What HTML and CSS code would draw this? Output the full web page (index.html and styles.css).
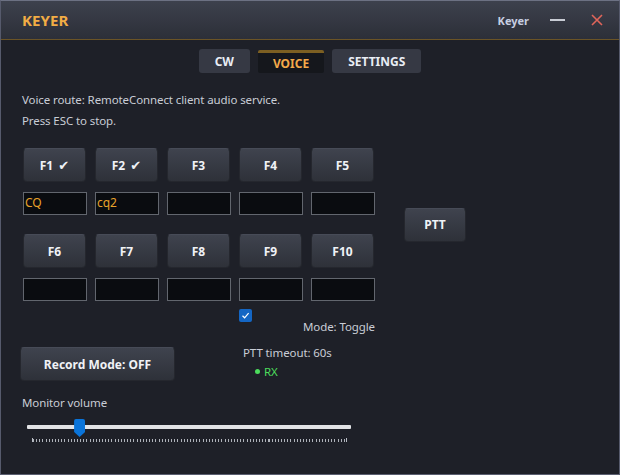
FILE: index.html
```html
<!DOCTYPE html>
<html lang="en">
<head>
<meta charset="utf-8">
<title>Keyer</title>
<link rel="stylesheet" href="styles.css">
</head>
<body>
<div class="window">
  <header class="titlebar">
    <div class="app-title">KEYER</div>
    <div class="title-controls">
      <span class="title-name">Keyer</span>
      <span class="min-btn"></span>
      <svg class="close-btn" width="12" height="12" viewBox="0 0 12 12"><path d="M1 1 L11 11 M11 1 L1 11" stroke="#e0655a" stroke-width="1.6" fill="none"/></svg>
    </div>
  </header>
  <main class="content">
    <nav class="tabs">
      <button class="tab">CW</button>
      <button class="tab active">VOICE</button>
      <button class="tab">SETTINGS</button>
    </nav>
    <p class="info">Voice route: RemoteConnect client audio service.<br>Press ESC to stop.</p>
    <section class="keys-row">
      <div class="keys-grid">
        <button class="btn key">F1 <span class="check">✔</span></button>
        <button class="btn key">F2 <span class="check">✔</span></button>
        <button class="btn key">F3</button>
        <button class="btn key">F4</button>
        <button class="btn key">F5</button>
        <div class="field">CQ</div>
        <div class="field">cq2</div>
        <div class="field"></div>
        <div class="field"></div>
        <div class="field"></div>
        <button class="btn key second">F6</button>
        <button class="btn key second">F7</button>
        <button class="btn key second">F8</button>
        <button class="btn key second">F9</button>
        <button class="btn key second">F10</button>
        <div class="field"></div>
        <div class="field"></div>
        <div class="field"></div>
        <div class="field"></div>
        <div class="field"></div>
      </div>
      <button class="btn ptt">PTT</button>
    </section>
    <div class="options">
      <span class="checkbox"><svg width="9" height="9" viewBox="0 0 9 9"><path d="M1.5 4.8 L3.6 6.8 L7.6 2.2" stroke="#ffffff" stroke-width="1.2" fill="none"/></svg></span>
      <span class="mode">Mode: Toggle</span>
    </div>
    <section class="lower">
      <button class="btn record">Record Mode: OFF</button>
      <div class="status">
        <div>PTT timeout: 60s</div>
        <div class="rx"><span class="dot"></span>RX</div>
      </div>
    </section>
    <div class="volume">
      <div class="vol-label">Monitor volume</div>
      <div class="slider" style="--value:15">
        <div class="track"></div>
        <div class="ticks"></div>
        <div class="thumb"></div>
      </div>
    </div>
  </main>
</div>
</body>
</html>
```
FILE: styles.css
```css
* { box-sizing: border-box; }
html, body { margin: 0; padding: 0; background: #1e2028; }
body { font-family: "Noto Sans", "DejaVu Sans", sans-serif; font-size: 11.5px; letter-spacing: -0.1px; color: #c9cdd6; }

.window {
  width: 620px;
  height: 475px;
  background: #1e2028;
  border-left: 1px solid #565a6c;
  border-right: 1px solid #565a6c;
  border-bottom: 1px solid #5a5e70;
  border-top: 1px solid #6c7183;
  display: flex;
  flex-direction: column;
}

.titlebar {
  height: 39px;
  display: flex;
  align-items: center;
  justify-content: space-between;
  padding: 0 16px 0 21px;
  background: linear-gradient(#3d414d, #2c2f38);
  border-bottom: 1px solid #6b5426;
}
.app-title {
  font-weight: 700;
  font-size: 15px;
  color: #f2ad45;
  letter-spacing: 0.1px;
}
.title-controls { display: flex; align-items: center; }
.title-name { font-weight: 700; font-size: 11px; color: #c6cee0; letter-spacing: 0; }
.min-btn { width: 15px; height: 2px; background: #c8ccd4; margin-left: 21px; }
.close-btn { margin-left: 26px; display: block; }

.content { padding: 9px 0 0 21px; }

.tabs { display: flex; justify-content: center; gap: 8px; margin-left: -21px; }
.tab {
  font-family: inherit;
  font-weight: 700;
  font-size: 12px;
  letter-spacing: 0;
  height: 24px;
  padding: 0 16px;
  border: none;
  border-radius: 3px;
  background: #363944;
  color: #e9edf5;
}
.tab.active {
  background: #15171c;
  color: #f3a94a;
  border-top: 3px solid #7c5f22;
  height: 23px;
  margin-top: 1px;
  padding: 0 15px;
  border-radius: 2px;
}

.info { margin: 16px 0 0; line-height: 21px; color: #c9cdd6; }

.btn {
  font-family: inherit;
  font-weight: 700;
  font-size: 12px;
  letter-spacing: 0;
  color: #f0f2f6;
  background: linear-gradient(#3f434e, #2e3139);
  border: 1px solid #25272e;
  border-top-color: #474b57;
  border-radius: 4px;
  padding: 0;
}

.keys-row { display: flex; align-items: center; gap: 29px; margin: 17px 0 0 1px; }
.keys-grid {
  display: grid;
  grid-template-columns: repeat(5, 64px);
  column-gap: 8px;
  row-gap: 10px;
}
.key { width: 63px; height: 34px; }
.key.second { margin-top: 9px; }
.check { font-family: "DejaVu Sans", sans-serif; font-size: 13px; margin-left: 2px; }
.field {
  height: 23px;
  background: #0a0c10;
  border: 1px solid #62666e;
  color: #e8a22a;
  padding-left: 1px;
  line-height: 20px;
  font-size: 12px;
}
.ptt { width: 62px; height: 34px; }

.options {
  display: grid;
  grid-template-columns: repeat(5, 64px);
  column-gap: 8px;
  margin: 8px 0 0 1px;
}
.checkbox {
  grid-column: 4;
  width: 13px;
  height: 13px;
  background: #1466c4;
  border-radius: 2px;
  display: flex;
  align-items: center;
  justify-content: center;
}
.mode { grid-column: 4 / 6; justify-self: end; line-height: 16px; margin-top: -3px; }

.lower { display: flex; align-items: flex-start; margin: 12px 0 0 -2px; }
.record { width: 155px; height: 34px; }
.status { margin: -4px 0 0 68px; line-height: 19px; }
.rx { color: #4cdc5c; display: flex; align-items: center; padding-left: 12px; }
.dot { width: 5px; height: 5px; border-radius: 50%; background: #4cdc5c; margin-right: 4px; }

.volume { margin-top: 12px; }
.vol-label { line-height: 19px; }
.slider { position: relative; width: 324px; height: 24px; margin: 6px 0 0 5px; }
.track { position: absolute; left: 0; right: 0; top: 7px; height: 4px; background: #e2e3e6; border-radius: 1px; }
.ticks {
  position: absolute;
  left: 5px;
  top: 20px;
  width: 315px;
  height: 4px;
  border-left: 1px solid #b8bcc4;
  border-right: 1px solid #b8bcc4;
  background: repeating-linear-gradient(90deg, #aeb2ba 0 1px, transparent 1px 3.14px) bottom / 100% 3px no-repeat;
}
.thumb {
  position: absolute;
  top: 1px;
  left: calc(5px + 314px * var(--value) / 100 - 5px);
  width: 11px;
  height: 18px;
  background: #0a74da;
  border-radius: 2px 2px 0 0;
  clip-path: polygon(0 0, 100% 0, 100% 72%, 50% 100%, 0 72%);
}
```
